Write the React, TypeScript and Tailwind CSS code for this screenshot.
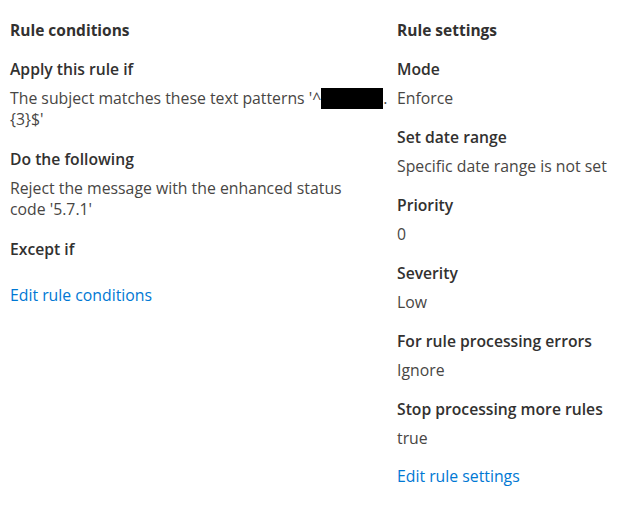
const settings = [
  { label: 'Mode', value: 'Enforce' },
  { label: 'Set date range', value: 'Specific date range is not set' },
  { label: 'Priority', value: '0' },
  { label: 'Severity', value: 'Low' },
  { label: 'For rule processing errors', value: 'Ignore' },
  { label: 'Stop processing more rules', value: 'true' },
];

function Field({ label, children, className = 'mt-[18px]' }: { label: string; children?: React.ReactNode; className?: string }) {
  return (
    <div className={className}>
      <h3 className="text-[15.7px] leading-[21px] font-semibold text-[#323130]">{label}</h3>
      {children && (
        <p className="mt-[8px] text-[15.8px] leading-[21px] text-[#484644] whitespace-nowrap">{children}</p>
      )}
    </div>
  );
}

export default function App() {
  return (
    <div
      className="w-[640px] h-[507px] bg-white pt-[20px] pl-[10px] grid grid-cols-[375px_1fr] gap-x-[12px] items-start"
      style={{ fontFamily: '"Open Sans", "Noto Sans", sans-serif' }}
    >
      {/* Rule conditions */}
      <section>
        <h2 className="text-[15.5px] leading-[21px] font-bold text-[#323130]">Rule conditions</h2>
        <Field label="Apply this rule if">
          The subject matches these text patterns '^
          <span className="inline-block w-[62px] h-[21px] bg-black align-[-5px]" />.
          <br />
          {'{3}$\''}
        </Field>
        <Field label="Do the following" className="mt-[19px]">
          Reject the message with the enhanced status
          <br />
          code '5.7.1'
        </Field>
        <Field label="Except if" className="mt-[19px]" />
        <a href="#" className="block mt-[25px] text-[15.8px] leading-[21px] text-[#0078d4]">
          Edit rule conditions
        </a>
      </section>

      {/* Rule settings */}
      <section>
        <h2 className="text-[15.5px] leading-[21px] font-bold text-[#323130]">Rule settings</h2>
        {settings.map((s) => (
          <Field key={s.label} label={s.label}>
            {s.value}
          </Field>
        ))}
        <a href="#" className="block mt-[17px] text-[15.8px] leading-[21px] text-[#0078d4]">
          Edit rule settings
        </a>
      </section>
    </div>
  );
}
